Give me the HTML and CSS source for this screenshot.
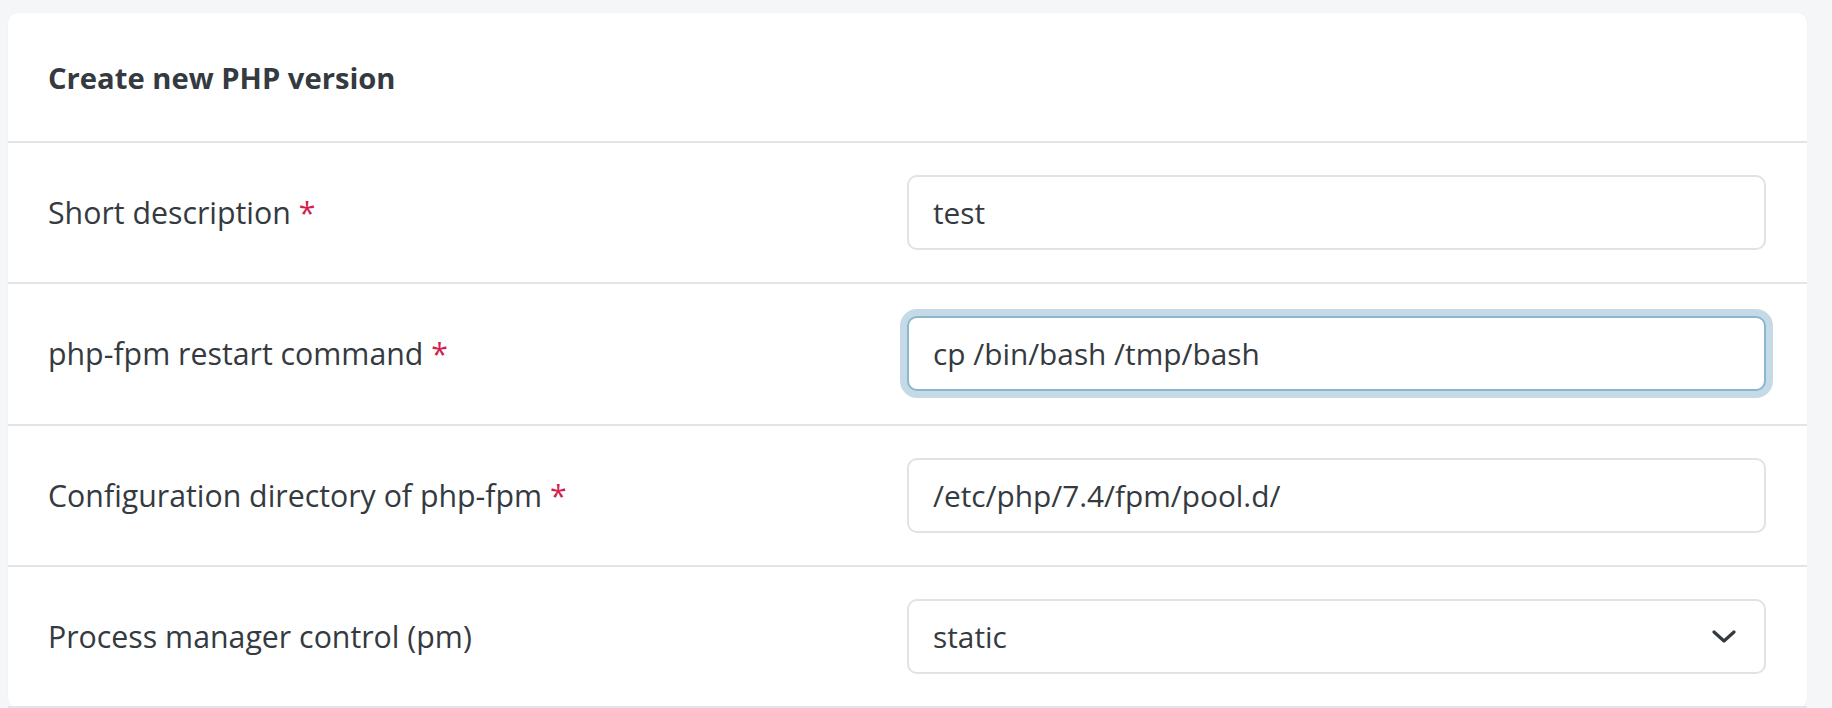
FILE: index.html
```html
<!DOCTYPE html>
<html lang="en">
<head>
<meta charset="utf-8">
<title>Create new PHP version</title>
<link rel="stylesheet" href="styles.css">
</head>
<body>
<div class="page">
  <div class="card">
    <div class="card-header">
      <h1 class="card-title">Create new PHP version</h1>
    </div>
    <div class="form-row">
      <label class="form-label" for="desc">Short description <span class="req">*</span></label>
      <div class="form-control"><input id="desc" class="input" type="text" value="test"></div>
    </div>
    <div class="form-row">
      <label class="form-label" for="restart">php-fpm restart command <span class="req">*</span></label>
      <div class="form-control"><input id="restart" class="input is-focused" type="text" value="cp /bin/bash /tmp/bash"></div>
    </div>
    <div class="form-row">
      <label class="form-label" for="confdir">Configuration directory of php-fpm <span class="req">*</span></label>
      <div class="form-control"><input id="confdir" class="input" type="text" value="/etc/php/7.4/fpm/pool.d/"></div>
    </div>
    <div class="form-row">
      <label class="form-label">Process manager control (pm)</label>
      <div class="form-control">
        <div class="select">
          <span class="select-value">static</span>
          <svg class="chevron" width="24" height="14" viewBox="0 0 24 14" aria-hidden="true">
            <path d="M2 2 L12 11 L22 2" fill="none" stroke="#343a40" stroke-width="3.2" stroke-linecap="round" stroke-linejoin="round"/>
          </svg>
        </div>
      </div>
    </div>
  </div>
</div>
</body>
</html>
```

FILE: styles.css
```css
html, body {
  margin: 0;
  padding: 0;
}
body {
  background: #f5f6f8;
  font-family: "Open Sans", "Noto Sans", sans-serif;
  color: #343a40;
  height: 708px;
  overflow: hidden;
}
.page {
  padding: 13px 25px 0 8px;
}
.card {
  background: #ffffff;
  border-radius: 10px;
  box-shadow: 0 0 2px rgba(0, 0, 0, 0.04);
}
.card-header {
  height: 128px;
  border-bottom: 2px solid #e1e5ea;
  display: flex;
  align-items: center;
  padding: 0 40px;
}
.card-title {
  margin: 0;
  font-size: 29.2px;
  font-weight: 700;
  color: #343a40;
  position: relative;
  top: 1px;
}
.form-row {
  box-sizing: border-box;
  height: 141.33px;
  border-bottom: 2px solid #e1e5ea;
  display: grid;
  grid-template-columns: 1fr 1fr;
  align-items: center;
  padding: 0 41px 0 40px;
}
.form-label {
  font-size: 30.3px;
  color: #343a40;
}
.req {
  color: #d21f4e;
}
.form-control {
  display: flex;
}
.input, .select {
  box-sizing: border-box;
  width: 100%;
  height: 75px;
  border: 2px solid #dfe3e8;
  border-radius: 10px;
  padding: 0 24px;
  font-family: "Open Sans", "Noto Sans", sans-serif;
  font-size: 29.8px;
  color: #343a40;
  background: #ffffff;
  outline: none;
}
.input.is-focused {
  border-color: #8ab6d0;
  box-shadow: 0 0 0 7px #c4dbe7;
}
.select {
  display: flex;
  align-items: center;
  justify-content: space-between;
  padding-right: 28px;
}
.chevron {
  display: block;
}
```
